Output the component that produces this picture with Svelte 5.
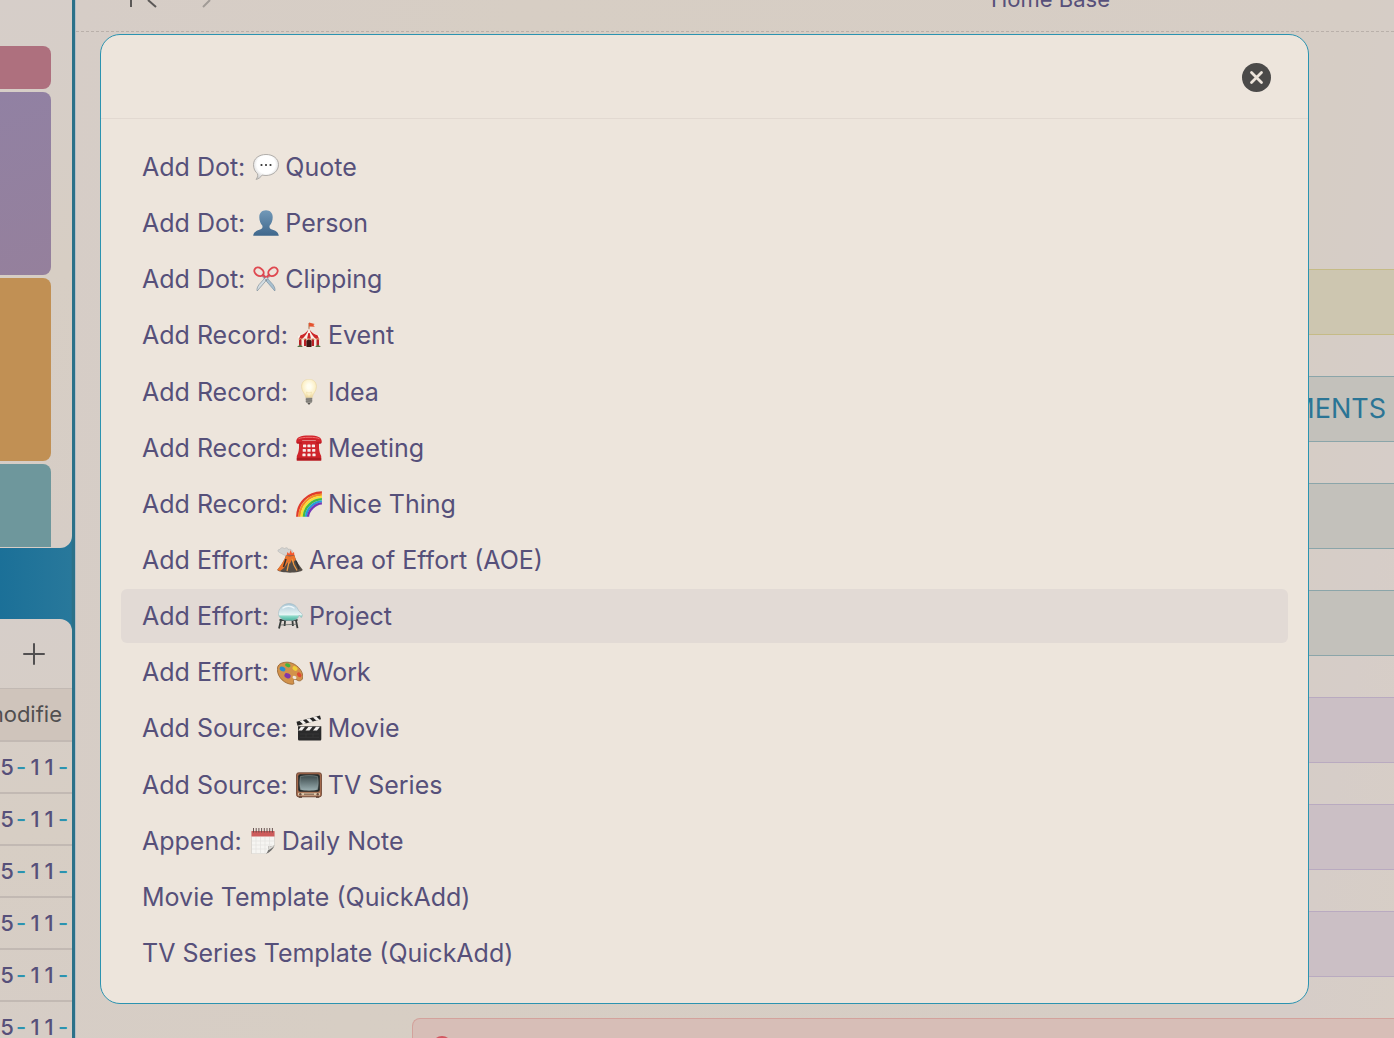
<!--
  Quick-add command picker over the workspace. The sidebar and the
  note behind it stay dimmed; rows keep prefix, icon and label apart
  so the icon can be drawn inline.
-->
<script lang="ts">
  interface Command {
    prefix: string;
    icon?: string;
    label?: string;
  }

  const commands: Command[] = [
    { prefix: 'Add Dot:', icon: 'speech', label: 'Quote' },
    { prefix: 'Add Dot:', icon: 'person', label: 'Person' },
    { prefix: 'Add Dot:', icon: 'scissors', label: 'Clipping' },
    { prefix: 'Add Record:', icon: 'tent', label: 'Event' },
    { prefix: 'Add Record:', icon: 'bulb', label: 'Idea' },
    { prefix: 'Add Record:', icon: 'phone', label: 'Meeting' },
    { prefix: 'Add Record:', icon: 'rainbow', label: 'Nice Thing' },
    { prefix: 'Add Effort:', icon: 'volcano', label: 'Area of Effort (AOE)' },
    { prefix: 'Add Effort:', icon: 'alembic', label: 'Project' },
    { prefix: 'Add Effort:', icon: 'palette', label: 'Work' },
    { prefix: 'Add Source:', icon: 'clapper', label: 'Movie' },
    { prefix: 'Add Source:', icon: 'tv', label: 'TV Series' },
    { prefix: 'Append:', icon: 'notepad', label: 'Daily Note' },
    { prefix: 'Movie Template (QuickAdd)' },
    { prefix: 'TV Series Template (QuickAdd)' }
  ];

  const callouts = [
    { tone: 'yellow', text: '' },
    { tone: 'blue', text: 'MENTS' },
    { tone: 'blue', text: '' },
    { tone: 'blue', text: '' },
    { tone: 'purple', text: '' },
    { tone: 'purple', text: '' },
    { tone: 'purple', text: '' }
  ];

  const dates = ['5-11-', '5-11-', '5-11-', '5-11-', '5-11-', '5-11-'];

  let selected = $state(8);
  let query = $state('');
</script>

<div class="app">
  <aside class="sidebar">
    <div class="pane top">
      <div class="block rose"></div>
      <div class="block violet"></div>
      <div class="block amber"></div>
      <div class="block teal"></div>
    </div>
    <div class="pane bottom">
      <div class="tools">
        <button class="add" aria-label="Add">
          <svg width="22" height="22" viewBox="0 0 22 22" aria-hidden="true">
            <path d="M11 1v20M1 11h20" stroke="#514f50" stroke-width="2" stroke-linecap="round" />
          </svg>
        </button>
      </div>
      <table>
        <thead>
          <tr><th><div class="clip">modifie</div></th></tr>
        </thead>
        <tbody>
          {#each dates as date}
            <tr>
              <td>
                {#each date as char}<span class="char" class:dash={char === '-'}>{char}</span>{/each}
              </td>
            </tr>
          {/each}
        </tbody>
      </table>
    </div>
  </aside>

  <main>
    <header class="bar">
      <svg class="nav" width="90" height="8" viewBox="0 0 90 8" fill="none" aria-hidden="true">
        <path d="M7 0v7" stroke="#5b5857" stroke-width="2" />
        <path d="M24 0l8 7" stroke="#5b5857" stroke-width="2" />
        <path d="M86 0l-7 7" stroke="#a19b97" stroke-width="2" />
      </svg>
      <span class="title">Home Base</span>
    </header>
    <div class="note">
      {#each callouts as callout}
        <div class="callout {callout.tone}">{callout.text}</div>
      {/each}
      <div class="callout red">
        <svg width="20" height="20" viewBox="0 0 20 20" fill="none" aria-hidden="true">
          <circle cx="10" cy="10" r="9" stroke="#d2565f" stroke-width="2" />
        </svg>
      </div>
    </div>
  </main>

  <div class="modal" role="dialog" aria-label="Commands">
    <div class="search">
      <input type="text" aria-label="Search commands" bind:value={query} />
      <button class="close" aria-label="Clear" onclick={() => (query = '')}>
        <svg width="29" height="29" viewBox="0 0 29 29" aria-hidden="true">
          <circle cx="14.5" cy="14.5" r="14.5" fill="#4b4a49" />
          <path d="M9.500 9.500l10 10M19.500 9.500l-10 10" stroke="#ede5dc" stroke-width="2.800" stroke-linecap="round" />
        </svg>
      </button>
    </div>
    <ul>
      {#each commands as command, i}
        <li>
          <button class="row" class:selected={i === selected} onmouseenter={() => (selected = i)}>
            <span>{command.prefix}</span>
            {#if command.icon}
              {@render glyph(command.icon)}
              <span>{command.label}</span>
            {/if}
          </button>
        </li>
      {/each}
    </ul>
  </div>
</div>

{#snippet glyph(name: string)}
  <svg class="glyph" width="26" height="26" viewBox="0 0 26 26" aria-hidden="true">
    {#if name === 'speech'}
      <defs>
        <radialGradient id="bubble" cx="0.5" cy="0.4" r="0.6">
          <stop offset="0.6" stop-color="#fff" />
          <stop offset="1" stop-color="#cfcfcf" />
        </radialGradient>
      </defs>
      <path d="M13 .5C20 .5 25.500 4.500 25.500 10.700S20 21.500 13 21.500c-1.400 0-2.600-.1-3.800-.5C7.500 23.500 5.500 25 3 25.400c1.500-1.700 1.800-3.300 1.600-5.600C2 17.800.5 14.600.5 10.700.5 4.500 6 .5 13 .5z" fill="url(#bubble)" stroke="#a9a6a3" stroke-width=".9" />
      <g fill="#333"><circle cx="8.500" cy="11" r="1.100" /><circle cx="13" cy="11" r="1.100" /><circle cx="17.500" cy="11" r="1.100" /></g>
    {:else if name === 'person'}
      <defs>
        <linearGradient id="bust" x1="0" y1="0" x2="0" y2="1">
          <stop offset="0" stop-color="#7299b8" />
          <stop offset="1" stop-color="#3f678c" />
        </linearGradient>
      </defs>
      <path d="M13 .2c4.300 0 6.800 2.900 6.700 7 0 3.500-1.300 6.400-3 8.200-.5 1.800-.2 3.100 1.600 3.800 3.900 1.400 7 2.400 7.500 6.600H.2c.5-4.200 3.600-5.200 7.500-6.600 1.800-.7 2.100-2 1.600-3.800-1.700-1.800-3-4.700-3-8.200C6.200 3.100 8.700.2 13 .2z" fill="url(#bust)" />
    {:else if name === 'scissors'}
      <path d="M8.500 9.500L21.800 25c.7-1.800-.2-4.200-2-6.600L11 8.600z" fill="#a8c0d0" stroke="#71889a" stroke-width=".6" />
      <path d="M17.500 9.500L4.200 25c-.7-1.800.2-4.200 2-6.600L15 8.600z" fill="#d4dde2" stroke="#728492" stroke-width=".6" />
      <g fill="none" stroke="#df4850" stroke-width="1.900">
        <ellipse cx="6" cy="5.800" rx="5" ry="3.800" transform="rotate(35 6 5.800)" />
        <ellipse cx="20" cy="5.800" rx="5" ry="3.800" transform="rotate(-35 20 5.800)" />
        <path d="M9.500 8.500l3 3M16.500 8.500l-3 3" />
      </g>
      <circle cx="13" cy="14" r=".8" fill="#6b747c" />
    {:else if name === 'tent'}
      <path d="M13 1v7" stroke="#a86a42" stroke-width="1" />
      <path d="M13 .6l5.800 1.500-1.500 1 1.500 1.700L13 4.400z" fill="#e5532f" />
      <path d="M3 15h20v9.500H3z" fill="#f3e9e0" />
      <path d="M3 15h2.500v9H3zM8 15h2.500v9H8zM15.500 15H18v9h-2.500zM20.500 15H23v9h-2.500z" fill="#b92025" />
      <path d="M10.500 25v-6l2.500-3 2.500 3v6z" fill="#3c1714" />
      <path d="M13 6.500c2 3 5.500 5.500 11 7.500v2.800H2V14c5.500-2 9-4.500 11-7.500z" fill="#faf3ec" />
      <path d="M12.500 7.500C10.500 10.500 7.500 12.500 4.500 13.300L3 16.800h3.500C9 14 11.500 11 12.500 7.500zM13.500 7.500c2 3 5 5 8 5.800l1.500 3.500h-3.500c-2.500-2.800-5-5.800-6-9.300zM12.300 11l-1.300 5.800h4L13.700 11z" fill="#cc2829" />
      <path d="M2 16.700q1.200 2 2.400 0 1.200 2 2.500 0 1.200 2 2.500 0 1.200 2 2.500 0 1.200 2 2.500 0 1.200 2 2.500 0 1.200 2 2.500 0 1.200 2 2.500 0 1 1.500 2 0" fill="none" stroke="#e5bd86" stroke-width=".8" />
      <path d="M1 25l3-2.500L7 25zM19 25l3-2.500 3 2.500z" fill="#577044" />
    {:else if name === 'bulb'}
      <defs>
        <radialGradient id="glow" cx="0.5" cy="0.4" r="0.6">
          <stop offset="0.2" stop-color="#fffdf0" />
          <stop offset="0.7" stop-color="#fcf0c8" />
          <stop offset="1" stop-color="#ead195" />
        </radialGradient>
      </defs>
      <path d="M13 .3c4.500 0 7.500 3 7.500 7.200 0 5-3.500 6.500-4.300 11.300H9.800C9 14 5.500 12.500 5.500 7.500 5.500 3.300 8.500.3 13 .3z" fill="url(#glow)" stroke="#e6d4a5" stroke-width=".5" />
      <path d="M11.500 18l-1-5 2.500 1 2.500-1-1 5" fill="none" stroke="#ecd8a0" stroke-width=".5" />
      <path d="M9.800 18.800h6.400v3.700c0 1-1 1.500-1.500 1.600-.2 1-3.200 1-3.400 0-.5-.1-1.500-.6-1.500-1.600z" fill="#95928c" />
      <path d="M9.800 20.300l6.400-.5M9.800 22.300l6.400-.5" stroke="#6b6863" stroke-width=".8" />
      <path d="M11.500 24.200h3l-1 1.400h-1z" fill="#3d3936" />
    {:else if name === 'phone'}
      <path d="M.2 7.200C0 2 4.500.5 13 .5S26 2 25.800 7.200c-.1 1.700-5.800 1.700-6 0V5.500H6.200v1.700c-.2 1.700-5.900 1.700-6 0z" fill="#d2232b" />
      <path d="M3 6h20v7c.3 3.500 1 5.500 2.200 8v4.500H.8V21C2 18.500 2.700 16.500 3 13z" fill="#d0242b" />
      <path d="M.8 22.800h24.400v2.700H.8z" fill="#b01a21" />
      <path d="M2.500 3.800c3-2 18-2 21 0" stroke="#f06d6c" stroke-width="1" fill="none" />
      <path d="M.8 8h5M20.200 8h5" stroke="#a8151c" stroke-width="1" />
      <g fill="#f8edeb">
        <rect x="7" y="9.500" width="3.200" height="2.800" rx=".6" /><rect x="11.400" y="9.500" width="3.200" height="2.800" rx=".6" /><rect x="15.800" y="9.500" width="3.200" height="2.800" rx=".6" />
        <rect x="6.700" y="14" width="3.200" height="2.800" rx=".6" /><rect x="11.400" y="14" width="3.200" height="2.800" rx=".6" /><rect x="16.100" y="14" width="3.200" height="2.800" rx=".6" />
        <rect x="6.400" y="18.500" width="3.200" height="2.800" rx=".6" /><rect x="11.400" y="18.500" width="3.200" height="2.800" rx=".6" /><rect x="16.400" y="18.500" width="3.200" height="2.800" rx=".6" />
      </g>
    {:else if name === 'rainbow'}
      <g fill="none" stroke-width="2.300">
        <path d="M1.200 25.800C1.500 12 11.500 1.700 25.900 1.500" stroke="#e03b2c" />
        <path d="M3.400 25.800C3.700 13.500 13 4 25.900 3.700" stroke="#f58e24" />
        <path d="M5.600 25.800C5.900 15 14.500 6.200 25.900 5.900" stroke="#f7e034" />
        <path d="M7.800 25.800C8.100 16.500 16 8.400 25.900 8.100" stroke="#43ba45" />
        <path d="M10 25.800C10.300 18 17.500 10.600 25.900 10.300" stroke="#239fd9" />
        <path d="M12 25.800C12.300 19.500 19 12.700 25.900 12.400" stroke="#7338b8" />
      </g>
    {:else if name === 'volcano'}
      <path d="M10 9C6 8 5 6.500 2.500 5.500 0 4.300.8 2 2.800 2.600 3.500.2 6.500.2 7.200 1.800 10-.2 11 1 11 2.500c2.500-1 4.500.5 4.500 2.500L14 9z" fill="#d3d3d1" stroke="#aeaeac" stroke-width=".5" />
      <path d="M9.500 8.500l1-3.500 1.700 2 1.500-4 1.300 3.500L17 5l.5 4z" fill="#f4572b" />
      <path d="M9 8.500h8.500c1 5 5 10 8.300 14.500-3 3.500-22.600 3.500-25.600 0C4 18.500 7.500 13.500 9 8.500z" fill="#544d47" />
      <path d="M9 8.500c2 1 6 1 8.500 0l1.300 4-2.800 3-1-3-2.200 4.500-1.300-2.500L7 21l-4 3-2.800-1C4 18 7.500 13 9 8.500z" fill="#eb742b" />
      <path d="M15 12l2 6 3 5.500M12 15l-2 9" stroke="#f19b43" stroke-width="1.200" fill="none" />
      <path d="M9 12l-2.500 8M19 14l3 8" stroke="#34302e" stroke-width="1.500" />
    {:else if name === 'alembic'}
      <defs>
        <linearGradient id="glass" x1="0" y1="0" x2="0" y2="1">
          <stop offset="0" stop-color="#a9c6d6" />
          <stop offset="0.65" stop-color="#e7f5f5" />
          <stop offset="0.75" stop-color="#8ad8c7" />
          <stop offset="1" stop-color="#48b39d" />
        </linearGradient>
      </defs>
      <path d="M2.500 17h18M4 17.300L2 25.500M19 17.300l1.500 7.800M8 18l-.4 5M15.500 18l.4 5" stroke="#373c3b" stroke-width="1.800" fill="none" />
      <path d="M12 .6c4.500 0 8 2.500 9.500 7l3.700 3.500c.6 1.700-.4 3-1 3.600l-2-2.700c-.8 4-3.700 5.500-10 5.500C5 17.500 1.500 14.800 1.500 10.500S5.500.6 12 .6z" fill="url(#glass)" stroke="#a2bac2" stroke-width=".6" />
      <path d="M6 5c3-2.500 8-2.500 11 0" stroke="#eef6f9" stroke-width="1.500" fill="none" stroke-linecap="round" />
      <path d="M3 22l17-.8" stroke="#555a59" stroke-width=".7" />
    {:else if name === 'palette'}
      <path d="M10 3.200C16 3 24.500 8.500 25.700 16c.9 5-2.500 7-5.400 5.200-1.700-1.200-3.500-1.500-3.800.3-.4 2.300 1.800 3.500-1.300 3.800C8 25.300.4 18.500.3 10.500.3 5.500 4 3.300 10 3.200z" fill="#d2924b" stroke="#93602c" stroke-width=".8" />
      <ellipse cx="5.500" cy="10" rx="3" ry="2.200" transform="rotate(25 5.500 10)" fill="#288ed0" />
      <ellipse cx="10.800" cy="6.300" rx="2.800" ry="1.900" transform="rotate(20 10.800 6.300)" fill="#40b33e" />
      <ellipse cx="18" cy="9.500" rx="2.800" ry="2" transform="rotate(35 18 9.500)" fill="#efcf35" />
      <ellipse cx="22.200" cy="15.800" rx="2.700" ry="1.900" transform="rotate(45 22.200 15.800)" fill="#df4a35" />
      <ellipse cx="10.500" cy="16.800" rx="3.200" ry="2.400" transform="rotate(25 10.500 16.800)" fill="#8136ac" />
      <ellipse cx="17.500" cy="18.500" rx="2" ry="1.500" transform="rotate(20 17.500 18.500)" fill="#efe5da" />
    {:else if name === 'clapper'}
      <path d="M.5 6.800L24 .4l1 3.900L1.500 10.700z" fill="#252525" />
      <path d="M3.500 6l3.500 3.200 3.200-.9L6.800 5.100zM10.200 4.200l3.500 3.200 3.200-.9-3.400-3.200zM16.900 2.400l3.500 3.200 3.200-.9-3.400-3.200z" fill="#f3f0ed" />
      <path d="M2 11.200h23.300V24c0 1-.5 1.500-1.500 1.500H3.500c-1 0-1.500-.5-1.500-1.500z" fill="#2a2a2b" />
      <path d="M5 11.700h4l-3 3.800H2.200zM12.500 11.700h4l-3 3.800h-4zM20 11.700h4l-3 3.800h-4z" fill="#f3f0ed" />
      <path d="M4 19h19M4 22.300h19M10 19v3.300M17 19v3.300" stroke="#3d3d3e" stroke-width=".6" />
    {:else if name === 'tv'}
      <defs>
        <linearGradient id="screen" x1="0" y1="0" x2="0" y2="1">
          <stop offset="0" stop-color="#3b494b" />
          <stop offset="1" stop-color="#99adb0" />
        </linearGradient>
      </defs>
      <path d="M2 24h4v1.800H3zM20 24h4l-1 1.800h-3z" fill="#46332b" />
      <rect x=".5" y=".8" width="25" height="24" rx="2" fill="#a3694c" stroke="#674130" stroke-width=".8" />
      <rect x="2.200" y="2.200" width="21.600" height="17.500" rx="2" fill="#232a2b" />
      <path d="M4.500 4.500c4-1.200 13-1.200 17 0 1 4 1 9 0 13-4 1.200-13 1.200-17 0-1-4-1-9 0-13z" fill="url(#screen)" stroke="#98a5a3" stroke-width=".5" />
      <path d="M2 20.800h22v2.700H2z" fill="#dac5a8" />
      <circle cx="4.300" cy="22.200" r="1.200" fill="#6c5143" /><circle cx="21.700" cy="22.200" r="1.200" fill="#6c5143" />
      <path d="M8 22.200h10" stroke="#846955" stroke-width="1.300" />
    {:else}
      <path d="M1.500 4h23v13.500c-2 3.500-5 6.500-8.500 8.300H1.500z" fill="#f6f5f2" stroke="#cecac5" stroke-width=".6" />
      <path d="M2 13h22M2 17h20M2 21h15M6 9v16.500M10.500 9v16.500M15 9v16M19.500 9v10" stroke="#e4e3e0" stroke-width=".7" />
      <path d="M24.500 17.500c-2 .5-4.300.8-6 .5.200 3-.5 6-2.500 7.800 4-1.500 7-4.500 8.500-8.300z" fill="#72716f" />
      <path d="M24.500 17.500c-1.500 2-4 3.800-7 5 1-1.400 1.200-3 1-4.500 2 .3 4 .1 6-.5z" fill="#dddbd7" />
      <path d="M1.500 3h23v5.500h-23z" fill="#cd5b5b" />
      <path d="M3.500 0v4.500M6.200 0v4.500M8.900 0v4.500M11.600 0v4.500M14.300 0v4.500M17 0v4.500M19.700 0v4.500M22.400 0v4.500" stroke="#5b4544" stroke-width=".9" />
    {/if}
  </svg>
{/snippet}

<style>
  :global(body) {
    margin: 0;
  }

  .app {
    --ink: #56507a;
    --paper: #d7cec6;
    --teal: #2b93b0;
    position: relative;
    display: flex;
    height: 100vh;
    overflow: hidden;
    background: var(--paper);
    color: var(--ink);
    font-family: Inter, 'Liberation Sans', sans-serif;
  }

  button {
    border: 0;
    padding: 0;
    background: none;
    color: inherit;
    font: inherit;
  }
  svg {
    display: block;
    flex: none;
  }

  /* sidebar */
  .sidebar {
    flex: none;
    display: flex;
    flex-direction: column;
    gap: 71px;
    box-sizing: border-box;
    width: 76px;
    border-right: 1px solid #b3bec8;
    padding-right: 3px;
    background: linear-gradient(90deg, #1b7098, #28789b 95%, #2b7189 96%);
  }
  .pane {
    background: linear-gradient(170deg, #d6cec9, #d7cec4 50%, #d6cdc6);
    overflow: hidden;
  }
  .top {
    display: flex;
    flex-direction: column;
    gap: 3px;
    padding: 46px 21px 1px 0;
    border-radius: 0 0 12px 0;
  }
  .bottom {
    flex: 1;
    border-radius: 0 12px 0 0;
  }
  .block {
    height: 183px;
    border-radius: 0 8px 8px 0;
  }
  .rose {
    height: 43px;
    background: #ae707e;
  }
  .violet {
    background: linear-gradient(160deg, #9181a3, #95809c);
  }
  .amber {
    background: #c19054;
  }
  .teal {
    height: 83px;
    border-radius: 0 8px 0 0;
    background: #6e979c;
  }
  .tools {
    display: flex;
    justify-content: flex-end;
    align-items: center;
    height: 69px;
    padding: 0 27px 0 0;
  }
  table {
    width: 100%;
    table-layout: fixed;
    border-collapse: collapse;
  }
  th,
  td {
    box-sizing: border-box;
    height: 52px;
    padding: 0;
    border-bottom: 2px solid #c2b9b3;
    font-size: 22px;
    line-height: 28px;
    text-align: left;
  }
  th {
    border-top: 1px solid #c2b9b3;
    background: #cfc4bb;
    color: #514f50;
    font-weight: 400;
  }
  .clip {
    display: flex;
    justify-content: flex-end;
    overflow: hidden;
    margin-right: 10px;
  }
  td {
    font-weight: 500;
    white-space: nowrap;
  }
  .char {
    display: inline-block;
    width: 14px;
    text-align: center;
  }
  .dash {
    color: var(--teal);
  }

  /* note behind the picker */
  main {
    flex: 1;
    min-width: 0;
    background: linear-gradient(100deg, #d6cdc7, #d7cec4 30%, #d6cdc5 85%, #d6cdc8 93%, #d7cec6);
  }
  .bar {
    display: flex;
    justify-content: space-between;
    align-items: flex-start;
    box-sizing: border-box;
    height: 32px;
    padding: 0 284px 0 48px;
    border-bottom: 1px dashed #b9b0aa;
  }
  .title {
    margin-top: -15px;
    font-size: 22px;
    line-height: 28px;
  }
  .note {
    display: flex;
    flex-direction: column;
    gap: 41px;
    margin-left: 336px;
    padding-top: 237px;
  }
  .callout {
    flex: none;
    box-sizing: border-box;
    height: 66px;
    padding: 0 8px;
    border: 1px solid;
    border-right: 0;
    border-radius: 8px 0 0 8px;
    font-size: 27px;
    line-height: 64px;
    text-align: right;
  }
  .yellow {
    border-color: #c5bb86;
    background: #cdc6b0;
  }
  .blue {
    border-color: #8ba5a9;
    background: #c3c1bb;
    color: #2b7595;
  }
  .purple {
    border-color: #b9aac0;
    background: #cbbfc5;
  }
  .red {
    padding: 17px 19px;
    border-color: #d3a29c;
    background: #d7beb7;
  }

  /* picker */
  .modal {
    position: absolute;
    inset: 34px 85px 34px 100px;
    display: flex;
    flex-direction: column;
    box-sizing: border-box;
    border: 1px solid var(--teal);
    border-radius: 20px;
    background: #ede5dc;
    overflow: hidden;
  }
  .search {
    flex: none;
    display: flex;
    align-items: center;
    box-sizing: border-box;
    height: 84px;
    padding: 2px 37px 0 42px;
    border-bottom: 1px solid #e2d9d1;
  }
  input {
    flex: 1;
    border: 0;
    outline: 0;
    background: none;
    color: inherit;
    font: inherit;
    font-size: 25px;
  }
  ul {
    flex: 1;
    display: flex;
    flex-direction: column;
    justify-content: space-between;
    margin: 0;
    padding: 21px 20px 23px;
    list-style: none;
  }
  .row {
    display: flex;
    align-items: center;
    width: 100%;
    height: 54px;
    padding: 0 21px;
    border-radius: 6px;
    font-size: 25px;
    line-height: 32px;
    text-align: left;
  }
  .selected {
    background: #e2dad5;
  }
  .glyph {
    margin: 0 6px 0 8px;
  }
</style>
